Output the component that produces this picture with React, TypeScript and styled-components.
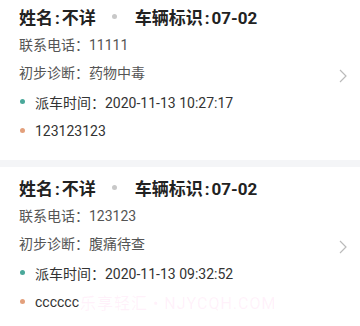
import styled, { createGlobalStyle } from 'styled-components';

const GlobalStyle = createGlobalStyle`
  body {
    margin: 0;
    background: #fff;
    font-family: Roboto, "Noto Sans CJK SC", sans-serif;
  }
`;

const Page = styled.div`
  position: relative;
  width: 360px;
  height: 326px;
  overflow: hidden;
  background: #f4f5f7;
  display: flex;
  flex-direction: column;
  gap: 7px;
`;

const Card = styled.div`
  position: relative;
  background: #fff;
  padding: 8px 19px 15px;
  display: flex;
  flex-direction: column;

  &:first-child {
    margin-top: -4px;
  }
`;

const TitleRow = styled.div`
  display: flex;
  align-items: center;
  height: 24px;
  margin-bottom: 3px;
  font-size: 17px;
  font-weight: 700;
  color: #222;
`;

const Colon = styled.span`
  margin: 0 2px;
`;

const Sep = styled.span`
  width: 5px;
  height: 5px;
  border-radius: 50%;
  background: #c8c8c8;
  margin: 0 18px 0 16px;
`;

const InfoLine = styled.div`
  height: 28px;
  line-height: 28px;
  font-size: 14px;
  color: #555;
`;

const DotLine = styled.div<{ dot: string }>`
  display: flex;
  align-items: center;
  height: 29px;
  font-size: 14px;
  color: #333;

  &::before {
    content: '';
    width: 5px;
    height: 5px;
    border-radius: 50%;
    background: ${({ dot }) => dot};
    margin: 0 10px 0 1px;
  }
`;

const Arrow = styled.svg`
  position: absolute;
  right: 13px;
  top: 50%;
  margin-top: -9px;
`;

const Watermark = styled.div`
  position: absolute;
  left: 80px;
  top: 290px;
  font-size: 16px;
  color: rgba(255, 150, 215, 0.13);
  letter-spacing: 1px;
  pointer-events: none;
`;

type Dispatch = {
  phone: string,
  diagnosis: string,
  time: string,
  note: string
};

const dispatches: Dispatch[] = [
  { phone: '11111', diagnosis: '药物中毒', time: '2020-11-13 10:27:17', note: '123123123' },
  { phone: '123123', diagnosis: '腹痛待查', time: '2020-11-13 09:32:52', note: 'cccccc' },
];

const App = () => (
  <>
    <GlobalStyle/>
    <Page>
      {dispatches.map(({ phone, diagnosis, time, note }) =>
        <Card key={phone}>
          <TitleRow>
            <span>姓名<Colon>:</Colon>不详</span>
            <Sep/>
            <span>车辆标识<Colon>:</Colon>07-02</span>
          </TitleRow>
          <InfoLine>{`联系电话：${phone}`}</InfoLine>
          <InfoLine>{`初步诊断：${diagnosis}`}</InfoLine>
          <DotLine dot="#4aa89a">{`派车时间：${time}`}</DotLine>
          <DotLine dot="#e3a07c">{note}</DotLine>
          <Arrow width="8" height="14" viewBox="0 0 8 14">
            <path d="M1 1l6 6-6 6" fill="none" stroke="#bbb" strokeWidth="1.2"/>
          </Arrow>
        </Card>,
      )}
      <Watermark>乐享轻汇 • NJYCQH.COM</Watermark>
    </Page>
  </>
);

export default App;
